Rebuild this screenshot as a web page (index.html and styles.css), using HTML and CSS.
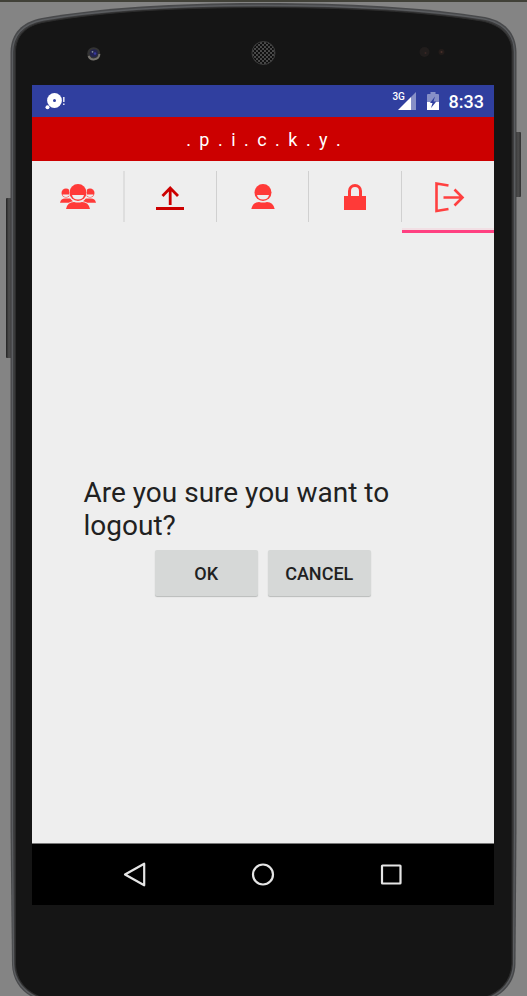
FILE: index.html
```html
<!DOCTYPE html>
<html lang="en">
<head>
<meta charset="utf-8">
<title>.p.i.c.k.y.</title>
<link rel="stylesheet" href="styles.css">
</head>
<body>
<svg class="shell" viewBox="0 0 527 996" aria-hidden="true">
  <defs>
    <pattern id="mesh" width="4" height="4" patternUnits="userSpaceOnUse">
      <rect width="4" height="4" fill="#4c4c4c"/>
      <circle cx="1" cy="1" r="1.150" fill="#0c0c0c"/>
      <circle cx="3" cy="3" r="1.150" fill="#0c0c0c"/>
    </pattern>
    <linearGradient id="key" x1="0" x2="1" y1="0" y2="0">
      <stop offset="0" stop-color="#222"/><stop offset=".5" stop-color="#505050"/><stop offset="1" stop-color="#303030"/>
    </linearGradient>
  </defs>
  <rect width="527" height="2" fill="#414138"/>
  <rect x="6" y="198" width="6" height="160" rx="1" fill="url(#key)"/>
  <rect x="515" y="132" width="6" height="65" rx="1" fill="url(#key)"/>
  <path d="M10.500 830V52C11 33 22 22 42 18C105 7 180 3 263.500 3S422 7 485 17C505 21 516 33 516.500 52V830L515.500 964C515 982 504 994 490 999H37C23 994 12.500 982 12 964Z" fill="#48494b"/>
  <path d="M12.500 830V52C13 34 23 24 43 20C106 9 180 5.500 263.500 5.500S421 9 484 19C504 23 514 34 514.500 52V830L513.500 964C513 981 502 993 488 998H39C25 993 14 981 13.500 964Z" fill="#3a3a3b" stroke="#5b5d60" stroke-width="1.300"/>
  <path d="M15.500 830V52C15.500 36 26 25 45 22C107 11 180 7.500 263.500 7.500S420 11 482 21C501 25 512 36 512 52V830V964C511 981 500 992 486 997H41C27 992 16 981 15.500 964Z" fill="#151515" stroke="#2c2c2c" stroke-width="1"/>
  <circle cx="93.700" cy="53.700" r="6.500" fill="#333"/>
  <path d="M88.500 56A5.700 5.700 0 0 0 99.400 54" fill="none" stroke="#77746f" stroke-width="2"/>
  <circle cx="93.800" cy="53.300" r="4" fill="#24244f"/>
  <circle cx="95" cy="53.500" r="1.300" fill="#3838a0"/>
  <circle cx="92.500" cy="51.800" r=".9" fill="#8790a0"/>
  <circle cx="263.500" cy="53" r="11.500" fill="url(#mesh)" stroke="#3c3c3c"/>
  <circle cx="424.500" cy="52" r="5" fill="#211d1c"/><circle cx="425.500" cy="53" r="1" fill="#3a2825"/>
  <circle cx="441.500" cy="52" r="3" fill="#231c1a"/><circle cx="441.500" cy="52" r="1" fill="#49302a"/>
</svg>
<main class="screen">
  <header class="status">
    <svg class="notice" viewBox="0 0 22 18"><circle cx="9.500" cy="8.500" r="7.400" fill="#fff"/><circle cx="9.500" cy="8.500" r="1.500" fill="#303f9f"/><circle cx="2.500" cy="15.300" r="2" fill="#fff"/><path d="M18.800 5v5M18.800 11.500v1.600" stroke="#e5e7f4" stroke-width="1.500"/></svg>
    <div class="indicators">
      <div class="signal"><span class="network">3G</span><svg viewBox="0 0 19 19"><path d="M13 5L18 0V18H13Z" fill="#8790c7"/><path d="M0 18L13 5V18Z" fill="#fff"/></svg></div>
      <svg class="battery" viewBox="0 0 12 18"><path d="M3.500 0H8.500V2H11Q12 2 12 3V10H0V3Q0 2 1 2H3.500Z" fill="#8790c7"/><path d="M0 10H12V18H0Z" fill="#fff"/><path d="M8 4.500L3 11H5.500L4 16L9.300 9.500H6.500Z" fill="#303f9f"/></svg>
      <time class="clock">8:33</time>
    </div>
  </header>
  <h1 class="title">. p . i . c . k . y .</h1>
  <nav class="tabs">
    <a class="tab"><svg width="36" height="26" viewBox="0 0 36 26">
      <g fill="#ff3a38"><circle cx="6" cy="9" r="4.500"/><circle cx="30" cy="9" r="4.500"/><path d="M0 18.700Q1 14.500 5 14.500H31Q35 14.500 36 18.700Z"/></g>
      <path d="M2.500 10.500H9.500Q9 13 6 13T2.500 10.500ZM26.500 10.500H33.500Q33 13 30 13T26.500 10.500Z" fill="#eee"/>
      <path d="M9 8A9 9 0 0 1 27 8Q27 15 23 17.200Q29 18 31 25H5Q7 18 13 17.200Q9 15 9 8Z" fill="#eee"/>
      <circle cx="18" cy="8.500" r="8.500" fill="#ff3a38"/><path d="M12 11H24Q23 15.600 18 15.600T12 11Z" fill="#eee"/><path d="M6 25Q7.500 18 14 18Q18 19.200 22 18Q28.500 18 30 25Z" fill="#ff3a38"/>
    </svg></a>
    <a class="tab upload"><svg width="28" height="26" viewBox="0 0 28 26" fill="none" stroke="#c00"><path d="M14.200 21V4.500M6.500 12L14.200 4L22 12" stroke-width="2.800"/><path d="M0 24.500H28" stroke-width="3"/></svg></a>
    <a class="tab"><svg width="24" height="26" viewBox="0 0 24 26" fill="#ff3a38"><circle cx="12" cy="8.500" r="8.500"/><path d="M6 11H18Q17 15.600 12 15.600T6 11Z" fill="#eee"/><path d="M.300 25Q2 18 8 18Q12 19.200 16 18Q22 18 23.700 25Z"/></svg></a>
    <a class="tab"><svg width="22" height="26" viewBox="0 0 22 26"><path d="M0 12H22V26H0Z" fill="#ff3a38"/><path d="M5.500 13V7A5.500 5.500 0 0 1 16.500 7V13" fill="none" stroke="#ff3a38" stroke-width="3"/></svg></a>
    <a class="tab active"><svg width="32" height="32" viewBox="0 0 32 32" fill="none" stroke="#ff4040"><path d="M15.500 4.500L3.500 2.500V30L15.500 28" stroke-width="2.600"/><path d="M10.500 16.500H30M21.500 8.500L29.500 16.500L21.500 24.500" stroke-width="2.600"/></svg></a>
  </nav>
  <section class="content">
    <p class="question">Are you sure you want to logout?</p>
    <div class="actions"><button>OK</button><button>CANCEL</button></div>
  </section>
  <footer class="navbar">
    <svg viewBox="0 0 26 26"><path d="M22.200 2.700V24.300L3 13.500Z"/></svg>
    <svg viewBox="0 0 26 26"><circle cx="13" cy="13.500" r="10"/></svg>
    <svg viewBox="0 0 26 26"><rect x="4" y="4.500" width="18.500" height="18" rx=".5"/></svg>
  </footer>
</main>
</body>
</html>
```

FILE: styles.css
```css
* { box-sizing: border-box; }
body {
  margin: 0;
  height: 996px;
  padding: 85px 33px 0 32px;
  overflow: hidden;
  background: #848484;
  font-family: Roboto, sans-serif;
}
svg { display: block; flex: none; }
.shell { position: absolute; left: 0; top: 0; width: 527px; height: 996px; }
.screen {
  position: relative;
  display: flex;
  flex-direction: column;
  width: 462px;
  height: 820px;
  background: #eee;
}
.status {
  display: flex;
  justify-content: space-between;
  height: 32px;
  padding: 0 10px 0 13px;
  background: #303f9f;
  color: #fff;
}
.notice { width: 22px; height: 18px; margin-top: 7px; }
.indicators { display: flex; }
.signal { display: flex; height: 18px; margin-top: 7px; }
.signal svg { width: 19px; height: 19px; margin-left: -7px; }
.network { font-size: 10px; line-height: 10px; font-weight: 500; letter-spacing: -0.2px; }
.battery { width: 12px; height: 18px; margin: 7px 0 0 10px; }
.clock { margin-left: 10px; font-size: 18px; line-height: 34px; font-weight: 500; }
.title {
  height: 44px;
  margin: 0;
  padding-left: 3px;
  background: #c00;
  color: #fff;
  font-size: 18px;
  font-weight: 400;
  line-height: 45px;
  letter-spacing: 2px;
  text-align: center;
  white-space: nowrap;
}
.tabs {
  display: grid;
  grid-template-columns: repeat(5, 1fr);
  height: 72px;
  background: linear-gradient(#dedede, #dedede) 91px 10px / 2px 51px no-repeat,
    linear-gradient(#d0d0d0, #d0d0d0) 184px 10px / 1px 51px no-repeat,
    linear-gradient(#d0d0d0, #d0d0d0) 276px 10px / 1px 51px no-repeat,
    linear-gradient(#d0d0d0, #d0d0d0) 369px 10px / 1px 51px no-repeat;
}
.tab { display: flex; justify-content: center; align-items: center; }
.upload { padding-right: 1px; }
.active {
  border-bottom: 3px solid #ff4081;
  padding: 2px 0 0 3px;
  background: linear-gradient(#f1dfe4, #f1dfe4) 0 100% / 100% 2px no-repeat padding-box;
}
.content { flex: 1; padding: 243px 52px 0 51.5px; }
.question {
  width: 330px;
  margin: 0;
  color: #212121;
  font-size: 28px;
  line-height: 33px;
}
.actions { display: flex; justify-content: center; gap: 10px; margin-top: 8px; }
button {
  width: 103px;
  height: 46px;
  padding: 1px 0 0;
  border: 0;
  border-radius: 2px;
  background: #d6d8d7;
  box-shadow: 0 1px 1px #b9bbba;
  color: #212121;
  font: 500 18px/46px Roboto, sans-serif;
}
.navbar {
  display: grid;
  grid-template-columns: repeat(3, 128px);
  justify-content: center;
  justify-items: center;
  align-items: center;
  height: 62px;
  padding-bottom: 2px;
  border-top: 1px solid #777;
  background: #000;
}
.navbar svg { width: 26px; height: 26px; fill: none; stroke: #e5e5e5; stroke-width: 2.2; stroke-linejoin: round; }
```
